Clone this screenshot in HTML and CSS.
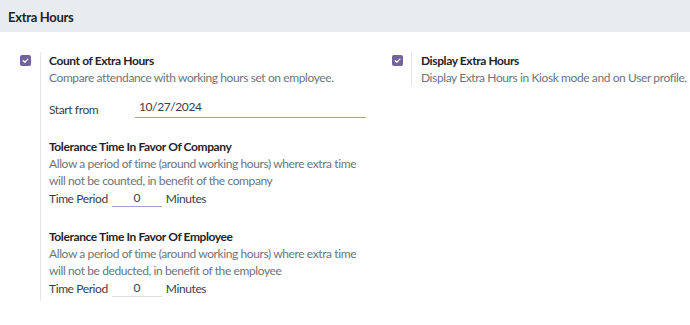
FILE: index.html
```html
<!DOCTYPE html>
<html lang="en">
<head>
  <meta charset="UTF-8">
  <meta name="viewport" content="width=device-width, initial-scale=1.0">
  <title>Extra Hours</title>
  <link rel="stylesheet" href="styles.css">
</head>
<body>
  <div class="section-title">Extra Hours</div>
  <div class="settings">
    <div class="setting-box">
      <div class="left-pane">
        <span class="checkbox">
          <svg viewBox="0 0 11 11"><path d="M3.2 5.7 L4.8 7.2 L7.9 4.1" fill="none" stroke="#fff" stroke-width="1.3" stroke-linecap="round" stroke-linejoin="round"/></svg>
        </span>
      </div>
      <div class="right-pane">
        <div class="label">Count of Extra Hours</div>
        <div class="muted">Compare attendance with working hours set on employee.</div>
        <div class="field-row start-row">
          <span class="light-label">Start from</span>
          <div class="input date-input focused">10/27/2024</div>
        </div>

        <div class="sub-block">
          <div class="label">Tolerance Time In Favor Of Company</div>
          <div class="muted">Allow a period of time (around working hours) where extra time will not be counted, in benefit of the company</div>
          <div class="field-row">
            <span>Time Period</span>
            <div class="input minutes-input focused">0</div>
            <span>Minutes</span>
          </div>
        </div>

        <div class="sub-block">
          <div class="label">Tolerance Time In Favor Of Employee</div>
          <div class="muted">Allow a period of time (around working hours) where extra time will not be deducted, in benefit of the employee</div>
          <div class="field-row">
            <span>Time Period</span>
            <div class="input minutes-input">0</div>
            <span>Minutes</span>
          </div>
        </div>
      </div>
    </div>

    <div class="setting-box">
      <div class="left-pane">
        <span class="checkbox">
          <svg viewBox="0 0 11 11"><path d="M3.2 5.7 L4.8 7.2 L7.9 4.1" fill="none" stroke="#fff" stroke-width="1.3" stroke-linecap="round" stroke-linejoin="round"/></svg>
        </span>
      </div>
      <div class="right-pane short">
        <div class="label">Display Extra Hours</div>
        <div class="muted">Display Extra Hours in Kiosk mode and on User profile.</div>
      </div>
    </div>
  </div>
</body>
</html>
```

FILE: styles.css
```css
body {
  margin: 0;
  background: #fff;
  font-family: "Lato", "Liberation Sans", sans-serif;
  font-size: 12px;
  letter-spacing: -0.4px;
  color: #374151;
}

.section-title {
  background: #e9ecef;
  height: 32px;
  line-height: 34px;
  padding-left: 8px;
  font-size: 13px;
  font-weight: 700;
  letter-spacing: -0.3px;
  color: #1f2328;
}

.settings {
  display: grid;
  grid-template-columns: 372px 1fr;
  padding-top: 20px;
}

.setting-box {
  display: flex;
  align-items: flex-start;
}

.left-pane {
  width: 40px;
  padding-left: 20px;
  padding-top: 3px;
  box-sizing: border-box;
}

.setting-box + .setting-box .left-pane {
  width: 39px;
}

.checkbox {
  display: block;
  width: 11px;
  height: 11px;
  border-radius: 2px;
  background: #71639e;
}

.checkbox svg {
  display: block;
  width: 11px;
  height: 11px;
}

.right-pane {
  border-left: 1px solid #e5e7eb;
  padding-left: 8px;
  padding-bottom: 4px;
  line-height: 17px;
}

.setting-box + .setting-box .right-pane {
  padding-left: 9px;
}

.right-pane.short {
  padding-bottom: 0;
}

.label {
  font-weight: 700;
  color: #1f2328;
}

.muted {
  color: #6c757d;
  max-width: 318px;
}

.field-row {
  display: flex;
  align-items: flex-end;
  color: #374151;
}

.start-row {
  margin-top: 12px;
}

.light-label {
  width: 86px;
}

.input {
  border-bottom: 1px solid #dcdde3;
  line-height: 17px;
}

.input.focused {
  border-bottom-color: #a59dcc;
}

.date-input {
  width: 227px;
  padding-left: 4px;
  padding-bottom: 2px;
}

.minutes-input {
  width: 50px;
  margin: 0 4px 0 4px;
  text-align: center;
}

.sub-block {
  margin-top: 20px;
}

.sub-block + .sub-block {
  margin-top: 21px;
}
```
